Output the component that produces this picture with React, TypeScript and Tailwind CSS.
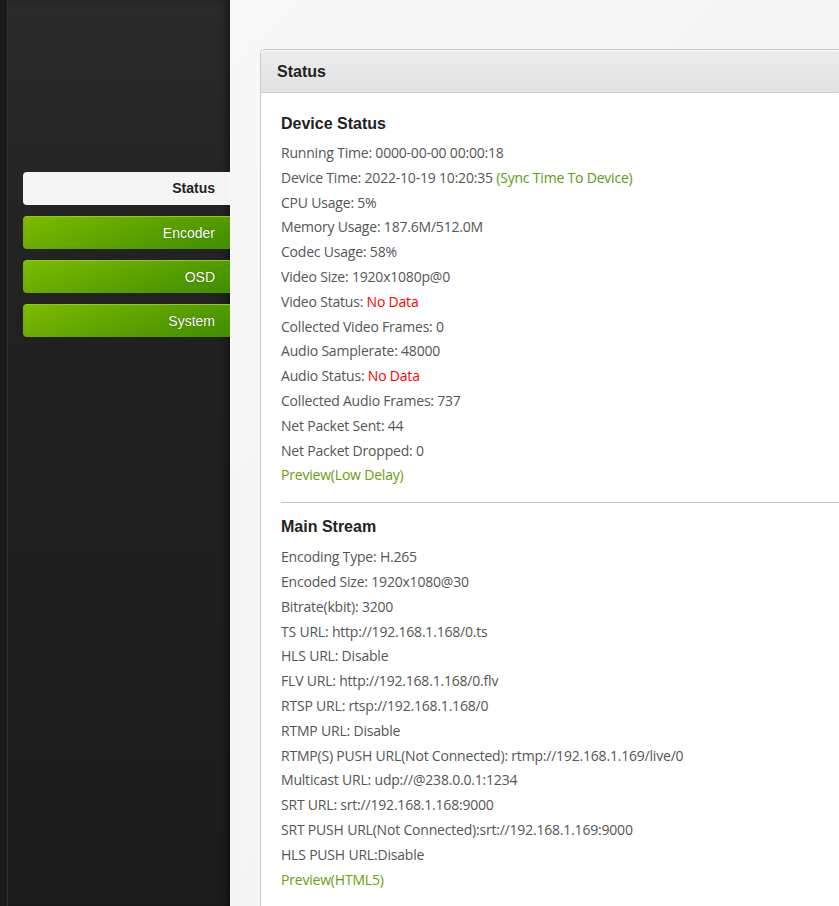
import React from "react";

const deviceLines: React.ReactNode[] = [
  "Running Time: 0000-00-00 00:00:18",
  <>Device Time: 2022-10-19 10:20:35 <span className="text-[#5c9c0e]">(Sync Time To Device)</span></>,
  "CPU Usage: 5%",
  "Memory Usage: 187.6M/512.0M",
  "Codec Usage: 58%",
  "Video Size: 1920x1080p@0",
  <>Video Status: <span className="text-[#ff0000]">No Data</span></>,
  "Collected Video Frames: 0",
  "Audio Samplerate: 48000",
  <>Audio Status: <span className="text-[#ff0000]">No Data</span></>,
  "Collected Audio Frames: 737",
  "Net Packet Sent: 44",
  "Net Packet Dropped: 0",
  <span className="text-[#6a9e0a]">Preview(Low Delay)</span>,
];

const streamLines: React.ReactNode[] = [
  "Encoding Type: H.265",
  "Encoded Size: 1920x1080@30",
  "Bitrate(kbit): 3200",
  "TS URL: http://192.168.1.168/0.ts",
  "HLS URL: Disable",
  "FLV URL: http://192.168.1.168/0.flv",
  "RTSP URL: rtsp://192.168.1.168/0",
  "RTMP URL: Disable",
  "RTMP(S) PUSH URL(Not Connected): rtmp://192.168.1.169/live/0",
  "Multicast URL: udp://@238.0.0.1:1234",
  "SRT URL: srt://192.168.1.168:9000",
  "SRT PUSH URL(Not Connected):srt://192.168.1.169:9000",
  "HLS PUSH URL:Disable",
  <span className="text-[#6a9e0a]">Preview(HTML5)</span>,
];

function NavButton({ label, active }: { label: string; active?: boolean }) {
  if (active) {
    return (
      <div className="h-[33px] rounded-l-[4px] bg-[#f5f5f5] flex items-center justify-end pr-[15px] text-[14px] font-bold text-[#222] [text-shadow:0_1px_0_#fff]">
        {label}
      </div>
    );
  }
  return (
    <div className="h-[33px] rounded-l-[4px] bg-[linear-gradient(160deg,#7dbb00_0%,#5ea300_50%,#3f8e00_100%)] border-t border-[#8fcb10] flex items-center justify-end pr-[15px] text-[14px] text-white [text-shadow:0_0_1px_rgba(0,0,0,0.5)]">
      {label}
    </div>
  );
}

export default function App() {
  return (
    <div className="flex h-[906px] w-[839px] overflow-hidden" style={{ fontFamily: "Arial, 'Liberation Sans', sans-serif" }}>
      <aside className="relative w-[230px] shrink-0 bg-[linear-gradient(180deg,#2a2a2a_0%,#212121_35%,#1c1c1c_100%)] flex">
        <div className="w-[8px] shrink-0 bg-[#191919] border-r border-[#2e2e2e]" />
        <div className="flex-1 flex flex-col pl-[15px] pt-[172px] gap-[11px] shadow-[inset_-6px_0_8px_-4px_rgba(0,0,0,0.5)]">
          <NavButton label="Status" active />
          <NavButton label="Encoder" />
          <NavButton label="OSD" />
          <NavButton label="System" />
        </div>
      </aside>
      <main className="flex-1 bg-[linear-gradient(135deg,#f8f8f8_0%,#f1f1f1_100%)] pl-[30px] pt-[49px]">
        <div className="w-[700px] h-full rounded-tl-[5px] border-l border-t border-[#c8c8c8] bg-white">
          <div className="h-[43px] bg-[linear-gradient(180deg,#ececec_0%,#e2e2e2_100%)] border-b border-[#cfcfcf] border-t border-t-white rounded-tl-[5px] flex items-center pl-[16px] text-[16px] font-bold text-[#222]">
            Status
          </div>
          <div className="pl-[20px] pt-[21px] text-[14px] text-[#555]">
            <h2 className="text-[16px] leading-[20px] font-bold text-[#222] mb-[7px]">Device Status</h2>
            <div className="leading-[24.8px] tracking-[-0.2px]" style={{ fontFamily: "'Open Sans', 'Noto Sans', sans-serif" }}>
              {deviceLines.map((l, i) => (
                <div key={i}>{l}</div>
              ))}
            </div>
            <div className="border-t border-[#c4c4c4] mt-[14px] mb-[14px]" />
            <h2 className="text-[16px] leading-[20px] font-bold text-[#222] mb-[8px]">Main Stream</h2>
            <div className="leading-[24.8px] tracking-[-0.2px]" style={{ fontFamily: "'Open Sans', 'Noto Sans', sans-serif" }}>
              {streamLines.map((l, i) => (
                <div key={i}>{l}</div>
              ))}
            </div>
          </div>
        </div>
      </main>
    </div>
  );
}
